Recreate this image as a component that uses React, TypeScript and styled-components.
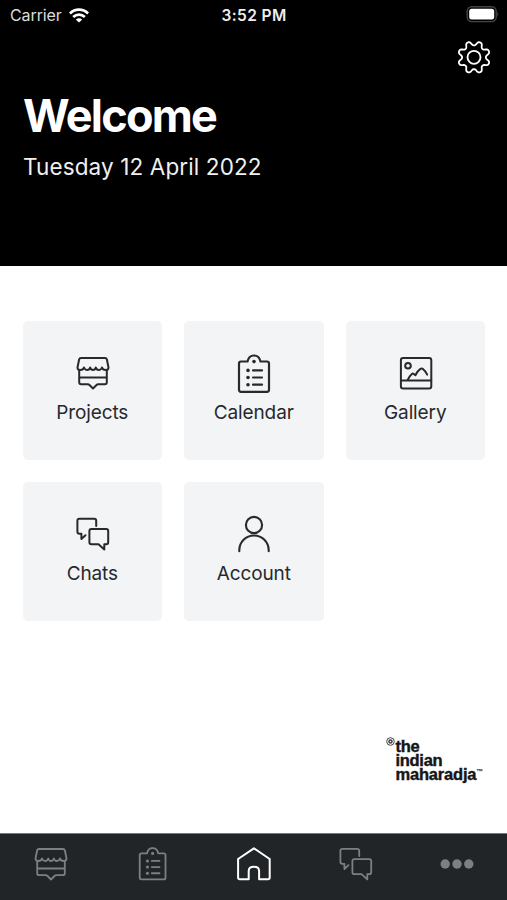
import React from "react";
import styled, { createGlobalStyle } from "styled-components";

const GlobalStyle = createGlobalStyle`
  *, *::before, *::after { box-sizing: border-box; }
  body { margin: 0; background: #fff; font-family: Inter, "Liberation Sans", sans-serif; }
`;

const Screen = styled.div`
  display: flex;
  flex-direction: column;
  width: 507px;
  height: 900px;
  overflow: hidden;
  background: #fff;
`;

const Header = styled.header`
  height: 266px;
  flex: none;
  background: #000;
  color: #fff;
`;

const StatusBar = styled.div`
  display: grid;
  grid-template-columns: 1fr auto 1fr;
  align-items: center;
  height: 30px;
  padding: 0 8px 0 10px;
`;

const Carrier = styled.div`
  display: flex;
  align-items: center;
  gap: 7px;
  color: #dcdcdc;
  font-size: 16px;
  letter-spacing: -0.1px;
`;

const Clock = styled.time`
  font-size: 15.5px;
  font-weight: 600;
  letter-spacing: 0.4px;
  margin-right: 1px;
  color: #eee;
`;

const BatteryWrap = styled.div`
  display: flex;
  justify-content: flex-end;
  height: 18px;
`;

const SettingsRow = styled.div`
  display: flex;
  justify-content: flex-end;
  padding: 9px 15.5px 0 0;
  height: 58px;
`;

const IconButton = styled.button`
  display: flex;
  width: 36px;
  height: 36px;
  padding: 0;
  border: 0;
  background: none;
  color: #fff;
`;

const Title = styled.h1`
  margin: 0;
  padding-left: 23px;
  font-size: 45px;
  line-height: 55px;
  font-weight: 700;
  letter-spacing: -1.75px;
`;

const DateLine = styled.p`
  margin: 9px 0 0;
  padding-left: 23px;
  font-size: 22.5px;
  line-height: 30px;
  letter-spacing: 0.12px;
  color: #f0f0f0;
`;

const Main = styled.main`
  display: flex;
  flex: 1;
  flex-direction: column;
  justify-content: space-between;
  padding: 54.5px 22px 52px 22.5px;
`;

const TileGrid = styled.div`
  display: grid;
  grid-template-columns: repeat(3, 139.5px);
  grid-auto-rows: 139.3px;
  gap: 22px;
`;

const Tile = styled.button`
  display: flex;
  flex-direction: column;
  align-items: center;
  padding: 31px 0 0;
  border: 0;
  border-radius: 5px;
  background: #f2f4f6;
  color: #27292c;
  font-family: inherit;
`;

const TileIcon = styled.span`
  display: flex;
  align-items: center;
  justify-content: center;
  height: 43px;
  padding-left: 1px;
`;

const TileLabel = styled.span`
  margin-top: 5px;
  font-size: 19px;
  line-height: 25px;
  letter-spacing: -0.12px;
`;

const Brand = styled.div`
  display: flex;
  align-items: flex-start;
  align-self: flex-end;
  gap: 1px;
  width: 99.5px;
  color: #161616;
`;

const BrandMark = styled.svg`
  flex: none;
  width: 9px;
  height: 9px;
  margin-top: -2px;
`;

const BrandName = styled.div`
  font-family: "Liberation Sans", sans-serif;
  font-size: 16.5px;
  line-height: 14px;
  font-weight: 700;
  letter-spacing: -0.15px;
  white-space: nowrap;
  -webkit-text-stroke: 0.4px currentColor;
`;

const BrandLine = styled.div<{ $tracking: number }>`
  height: 14px;
  letter-spacing: ${(p) => p.$tracking}px;
`;

const TradeMark = styled.span`
  font-size: 7px;
  line-height: 0;
  vertical-align: 6px;
  letter-spacing: -0.5px;
  -webkit-text-stroke: 0;
`;

const TabBar = styled.nav`
  display: grid;
  grid-template-columns: repeat(5, 1fr);
  height: 67px;
  flex: none;
  border-top: 1px solid #77797a;
  background: #212528;
`;

const Tab = styled.button<{ $active?: boolean }>`
  display: flex;
  align-items: center;
  justify-content: center;
  height: 59px;
  padding: 0 0 0 1.4px;
  border: 0;
  background: none;
  color: ${(p) => (p.$active ? "#fff" : "#7d8082")};
`;

const Glyph = styled.svg`
  display: block;
  flex: none;
  overflow: visible;
  fill: none;
  stroke: currentColor;
  stroke-linecap: round;
  stroke-linejoin: round;
`;

type IconProps = { scale?: number; weight?: number };

const ShopIcon = ({ scale = 1, weight = 2 }: IconProps) => (
  <Glyph width={34 * scale} height={34 * scale} viewBox="0 0 34 34" strokeWidth={weight}>
    <path d="M5 2H29Q30.5 2 30.9 3.5L32.5 11.5Q32.5 14 29.7 14Q26.6 14 26 11.5Q25 14 22.8 14Q20.5 14 19.8 11.5Q19 14 17 14Q15 14 14.2 11.5Q13.5 14 11.2 14Q9 14 8 11.5Q7.4 14 4.3 14Q1.5 14 1.5 11.5L3.1 3.5Q3.5 2 5 2Z" />
    <path d="M3.2 14V26.2Q3.2 28.2 5.2 28.2H11.7Q12.8 28.2 13.5 29L17 32.5L20.5 29Q21.2 28.2 22.3 28.2H28.8Q30.8 28.2 30.8 26.2V14M3.2 21.5H30.8" />
  </Glyph>
);

const ClipboardIcon = ({ scale = 1, weight = 2.2 }: IconProps) => (
  <Glyph width={34 * scale} height={41 * scale} viewBox="0 0 34 41" strokeWidth={weight}>
    <path d="M4 8.5H10.5Q11.7 2.5 17 2.5Q22.3 2.5 23.5 8.5H30Q32 8.5 32 10.5V36.8Q32 38.8 30 38.8H4Q2 38.8 2 36.8V10.5Q2 8.5 4 8.5Z" />
    <path d="M16 17.4H25M16 24.5H25M16 31.7H25" />
    <g fill="currentColor" stroke="none">
      <circle cx="17" cy="8.6" r="1.8" />
      <circle cx="11" cy="17.4" r="1.8" />
      <circle cx="11" cy="24.5" r="1.8" />
      <circle cx="11" cy="31.7" r="1.8" />
    </g>
  </Glyph>
);

const GalleryIcon = () => (
  <Glyph width="34" height="34" viewBox="0 0 34 34" strokeWidth="2">
    <rect x="1.9" y="2" width="30.4" height="30.4" rx="2.2" />
    <circle cx="9" cy="9.8" r="2.8" />
    <path d="M2 24.6H32.2M8.5 24.3Q11 19.5 13.1 17.8Q14 17.2 14.8 18L16.4 19.3Q18.8 14.6 21.4 12.9Q23 12 24.5 13.4Q26.4 15 28.2 18.6" />
  </Glyph>
);

const ChatsIcon = ({ scale = 1, weight = 2 }: IconProps) => (
  <Glyph width={34 * scale} height={34 * scale} viewBox="0 0 34 34" strokeWidth={weight}>
    <path d="M20.2 9V3.8Q20.2 1.8 18.2 1.8H3.4Q1.4 1.8 1.4 3.8V14.8Q1.4 16.8 3.4 16.8H5.4V22L9.5 18.2" />
    <path d="M15.4 12.1H30.2Q32.2 12.1 32.2 14.1V25.2Q32.2 27.2 30.2 27.2H28.3V32.4L22.5 27.2H15.4Q13.4 27.2 13.4 25.2V14.1Q13.4 12.1 15.4 12.1Z" />
  </Glyph>
);

const AccountIcon = () => (
  <Glyph width="34" height="38" viewBox="0 0 34 38" strokeWidth="2.1">
    <circle cx="17" cy="10" r="8.1" />
    <path d="M2.3 36.3V35.2A14.7 14.7 0 0 1 31.7 35.2V36.3" />
  </Glyph>
);

const HomeIcon = () => (
  <Glyph width="36" height="36" viewBox="0 0 36 36" strokeWidth="2">
    <path d="M17.9 2.3L33.7 13V31.5Q33.7 33.2 32 33.2H23.1V25Q23.1 20.8 17.9 20.8Q12.7 20.8 12.7 25V33.2H3.8Q2.1 33.2 2.1 31.5V13Z" />
  </Glyph>
);

const MoreIcon = () => (
  <Glyph width="34" height="10" viewBox="0 0 34 10">
    <g fill="currentColor" stroke="none">
      <circle cx="5.2" cy="5" r="4.7" />
      <circle cx="17" cy="5" r="4.7" />
      <circle cx="28.8" cy="5" r="4.7" />
    </g>
  </Glyph>
);

// Eight rounded teeth, traced as a radius that swells and dips around the hub.
const gearOutline =
  Array.from({ length: 160 }, (_, i) => {
    const a = (i / 160) * Math.PI * 2;
    const r = 14 - (2.1 * Math.tanh(1.3 * Math.cos(8 * a))) / Math.tanh(1.3);
    return `${i ? "L" : "M"}${(18 + r * Math.cos(a)).toFixed(2)} ${(18.3 + r * Math.sin(a)).toFixed(2)}`;
  }).join("") + "Z";

const GearIcon = () => (
  <Glyph width="36" height="36" viewBox="0 0 36 36" strokeWidth="1.8">
    <path d={gearOutline} />
    <circle cx="18" cy="18.3" r="6.5" />
  </Glyph>
);

const WifiIcon = () => (
  <svg width="20" height="15" viewBox="0 0 20 15" fill="none" stroke="#fff" strokeWidth="2.7">
    <path d="M0.9 5.5Q4.8 1.7 10 1.7Q15.2 1.7 19.1 5.5" />
    <path d="M4.2 9Q6.7 6.6 10 6.6Q13.3 6.6 15.8 9" />
    <path d="M10 14.6L6.8 11.4Q10 8.9 13.2 11.4Z" fill="#fff" stroke="none" />
  </svg>
);

const BatteryIcon = () => (
  <svg width="34" height="17" viewBox="0 0 34 17">
    <rect x="2.2" y="0.8" width="29" height="14.8" rx="4.5" fill="none" stroke="#444" strokeWidth="1.4" />
    <rect x="4.2" y="2.8" width="25" height="10.8" rx="2.5" fill="#fff" />
    <path d="M32.3 5.8Q34.3 8.2 32.3 10.6Z" fill="#444" />
  </svg>
);

const tiles = [
  { label: "Projects", icon: <ShopIcon /> },
  { label: "Calendar", icon: <ClipboardIcon /> },
  { label: "Gallery", icon: <GalleryIcon /> },
  { label: "Chats", icon: <ChatsIcon /> },
  { label: "Account", icon: <AccountIcon /> },
];

export default function App() {
  return (
    <Screen>
      <GlobalStyle />
      <Header>
        <StatusBar>
          <Carrier>
            Carrier
            <WifiIcon />
          </Carrier>
          <Clock>3:52 PM</Clock>
          <BatteryWrap>
            <BatteryIcon />
          </BatteryWrap>
        </StatusBar>
        <SettingsRow>
          <IconButton aria-label="Settings">
            <GearIcon />
          </IconButton>
        </SettingsRow>
        <Title>Welcome</Title>
        <DateLine>Tuesday 12 April 2022</DateLine>
      </Header>
      <Main>
        <TileGrid>
          {tiles.map((tile) => (
            <Tile key={tile.label}>
              <TileIcon>{tile.icon}</TileIcon>
              <TileLabel>{tile.label}</TileLabel>
            </Tile>
          ))}
        </TileGrid>
        <Brand>
          <BrandMark viewBox="0 0 9 9" fill="none" stroke="#444">
            <circle cx="4.5" cy="4.5" r="3.8" strokeWidth="1" />
            <circle cx="4.5" cy="4.5" r="1.5" strokeWidth="1.6" />
          </BrandMark>
          <BrandName>
            <BrandLine $tracking={-0.3}>the</BrandLine>
            <BrandLine $tracking={-0.3}>indian</BrandLine>
            <BrandLine $tracking={-0.2}>
              maharadja<TradeMark>™</TradeMark>
            </BrandLine>
          </BrandName>
        </Brand>
      </Main>
      <TabBar>
        <Tab aria-label="Projects">
          <ShopIcon weight={1.8} />
        </Tab>
        <Tab aria-label="Calendar">
          <ClipboardIcon scale={0.86} weight={2.1} />
        </Tab>
        <Tab $active aria-label="Home">
          <HomeIcon />
        </Tab>
        <Tab aria-label="Chats">
          <ChatsIcon weight={1.8} />
        </Tab>
        <Tab aria-label="More">
          <MoreIcon />
        </Tab>
      </TabBar>
    </Screen>
  );
}
